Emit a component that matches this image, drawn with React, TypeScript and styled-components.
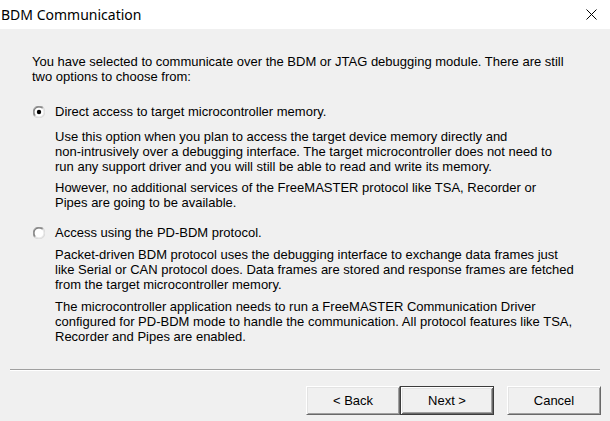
import React from "react";
import styled, { createGlobalStyle } from "styled-components";

const GlobalStyle = createGlobalStyle`
  html, body {
    margin: 0;
    padding: 0;
    background: #f0f0f0;
  }
  * { box-sizing: border-box; }
`;

const Window = styled.div`
  width: 610px;
  height: 421px;
  display: flex;
  flex-direction: column;
  background: #f0f0f0;
  font-family: "Liberation Sans", Arial, sans-serif;
  font-size: 13px;
  color: #000;
  overflow: hidden;
`;

const TitleBar = styled.div`
  height: 29px;
  flex: none;
  background: #ffffff;
  display: flex;
  align-items: center;
  justify-content: space-between;
  padding: 0 13px 0 1px;
`;

const Title = styled.span`
  font-family: "Noto Sans", "Segoe UI", sans-serif;
  font-size: 14px;
  color: #000;
  padding-bottom: 1px;
`;

const CloseIcon = styled.svg`
  width: 11px;
  height: 11px;
  display: block;
`;

const Content = styled.div`
  flex: 1;
  padding: 25px 10px 0 32px;
  line-height: 15px;
`;

const Paragraph = styled.p<{ $mt?: number }>`
  margin: ${(p) => p.$mt ?? 0}px 0 0 0;
  white-space: nowrap;
`;

const Option = styled.div<{ $mt: number }>`
  margin-top: ${(p) => p.$mt}px;
`;

const OptionHeader = styled.label`
  display: flex;
  align-items: center;
  gap: 10px;
  padding-left: 1px;
`;

const RadioIcon = styled.svg`
  width: 12px;
  height: 12px;
  flex: none;
  display: block;
`;

const Description = styled.div<{ $mt: number }>`
  margin: ${(p) => p.$mt}px 0 0 23px;
`;

const Footer = styled.div`
  flex: none;
  display: flex;
  flex-direction: column;
  padding-bottom: 6px;
`;

const Separator = styled.div`
  margin: 0 10px;
  height: 2px;
  border-top: 1px solid #a0a0a0;
  border-bottom: 1px solid #ffffff;
`;

const ButtonRow = styled.div`
  display: flex;
  justify-content: flex-end;
  margin-top: 15px;
  padding-right: 9px;
`;

const Button = styled.button<{ $default?: boolean; $ml?: number }>`
  width: 94px;
  height: 29px;
  margin-left: ${(p) => p.$ml ?? 0}px;
  font-family: "Liberation Sans", Arial, sans-serif;
  font-size: 13px;
  color: #000;
  background: #f0f0f0;
  padding: 0;
  border: 1px solid;
  border-color: ${(p) =>
    p.$default ? "#3c3c3c" : "#ffffff #696969 #696969 #ffffff"};
  box-shadow: ${(p) =>
    p.$default
      ? "inset 1px 1px #ffffff, inset -1px -1px #696969, inset 2px 2px #e3e3e3, inset -2px -2px #a0a0a0"
      : "inset 1px 1px #e3e3e3, inset -1px -1px #a0a0a0"};
  cursor: default;
`;

const Radio: React.FC<{ checked?: boolean }> = ({ checked }) => (
  <RadioIcon viewBox="0 0 12 12">
    <circle cx="6" cy="6" r="5.5" fill="#ffffff" />
    <path d="M1.76 10.24 A6 6 0 0 1 10.24 1.76" fill="none" stroke="#a0a0a0" strokeWidth="1.2" />
    <path d="M2.46 9.54 A5 5 0 0 1 9.54 2.46" fill="none" stroke="#696969" strokeWidth="1" />
    <path d="M10.24 1.76 A6 6 0 0 1 1.76 10.24" fill="none" stroke="#dcdcdc" strokeWidth="1.2" />
    <path d="M9.54 2.46 A5 5 0 0 1 2.46 9.54" fill="none" stroke="#e3e3e3" strokeWidth="1" />
    {checked && <circle cx="6" cy="6" r="2.2" fill="#000" />}
  </RadioIcon>
);

export default function App() {
  return (
    <>
      <GlobalStyle />
      <Window>
        <TitleBar>
          <Title>BDM Communication</Title>
          <CloseIcon viewBox="0 0 11 11">
            <path d="M0.5 0.5 L10.5 10.5 M10.5 0.5 L0.5 10.5" stroke="#000" strokeWidth="1" />
          </CloseIcon>
        </TitleBar>
        <Content>
          <Paragraph>
            You have selected to communicate over the BDM or JTAG debugging module. There are still
            <br />
            two options to choose from:
          </Paragraph>

          <Option $mt={20}>
            <OptionHeader>
              <Radio checked />
              <span>Direct access to target microcontroller memory.</span>
            </OptionHeader>
            <Description $mt={10}>
              <Paragraph>
                Use this option when you plan to access the target device memory directly and
                <br />
                non-intrusively over a debugging interface. The target microcontroller does not need to
                <br />
                run any support driver and you will still be able to read and write its memory.
              </Paragraph>
              <Paragraph $mt={6}>
                However, no additional services of the FreeMASTER protocol like TSA, Recorder or
                <br />
                Pipes are going to be available.
              </Paragraph>
            </Description>
          </Option>

          <Option $mt={15}>
            <OptionHeader>
              <Radio />
              <span>Access using the PD-BDM protocol.</span>
            </OptionHeader>
            <Description $mt={7}>
              <Paragraph>
                Packet-driven BDM protocol uses the debugging interface to exchange data frames just
                <br />
                like Serial or CAN protocol does. Data frames are stored and response frames are fetched
                <br />
                from the target microcontroller memory.
              </Paragraph>
              <Paragraph $mt={7}>
                The microcontroller application needs to run a FreeMASTER Communication Driver
                <br />
                configured for PD-BDM mode to handle the communication. All protocol features like TSA,
                <br />
                Recorder and Pipes are enabled.
              </Paragraph>
            </Description>
          </Option>
        </Content>
        <Footer>
          <Separator />
          <ButtonRow>
            <Button>&lt; Back</Button>
            <Button $default>Next &gt;</Button>
            <Button $ml={13}>Cancel</Button>
          </ButtonRow>
        </Footer>
      </Window>
    </>
  );
}
